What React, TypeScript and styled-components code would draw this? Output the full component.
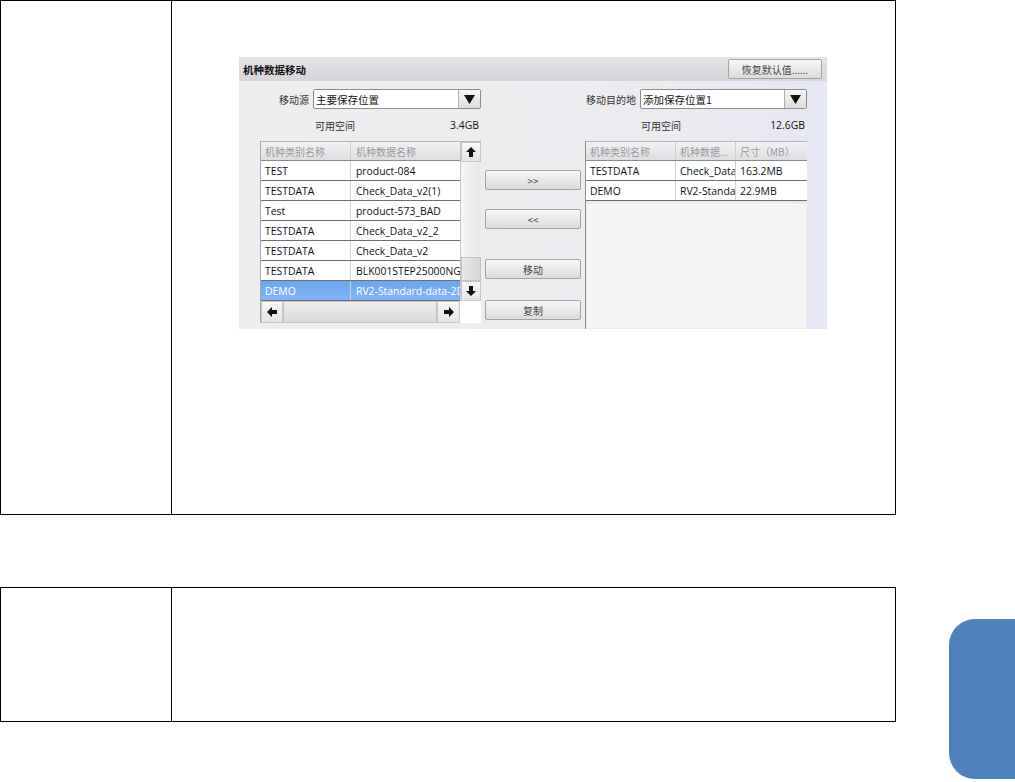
import styled, { createGlobalStyle } from 'styled-components';

const GlobalStyle = createGlobalStyle`
    html, body {
        margin: 0;
        padding: 0;
        background: #ffffff;
    }
    body {
        font-family: "Open Sans", "Noto Sans CJK SC", sans-serif;
    }
`;

const Page = styled.div`
    width: 1015px;
    height: 782px;
    display: flex;
    overflow: hidden;
`;

const MainCol = styled.div`
    width: 896px;
    display: flex;
    flex-direction: column;
`;

const SideCol = styled.div`
    flex: 1;
    display: flex;
    justify-content: flex-end;
    align-items: flex-start;
`;

const ThumbTab = styled.div`
    margin-top: 619px;
    width: 66px;
    height: 160px;
    background: #4f81bd;
    border-radius: 26px 0 0 26px;
`;

const Table = styled.div<{ $height: number; $top?: number }>`
    display: grid;
    grid-template-columns: 171px 1fr;
    height: ${p => p.$height}px;
    margin-top: ${p => p.$top || 0}px;
    border: 1px solid #000;
    box-sizing: border-box;
`;

const LeftCell = styled.div`
    border-right: 1px solid #000;
`;

const RightCell = styled.div`
    padding: 56px 0 0 67px;
`;

/* ---------- the captured dialog ---------- */

const Shot = styled.div`
    width: 588px;
    height: 272px;
    background: linear-gradient(to right, #eeeef0 0%, #ececf0 70%, #e5e7f3 100%);
    display: flex;
    flex-direction: column;
    font-size: 10.4px;
    color: #111;
    overflow: hidden;
`;

const TitleBar = styled.div`
    height: 25px;
    display: flex;
    align-items: center;
    justify-content: space-between;
    padding: 0 5px 0 4px;
    background: linear-gradient(#e4e4e8, #d6d6da);
`;

const Title = styled.span`
    font-family: "Noto Sans CJK SC", sans-serif;
    font-weight: 700;
    font-size: 10.5px;
    color: #111;
`;

const Button = styled.div<{ $width?: number; $top?: number }>`
    width: ${p => p.$width || 96}px;
    height: 20px;
    margin-top: ${p => p.$top || 0}px;
    box-sizing: border-box;
    border: 1px solid #a3a3a3;
    border-radius: 2px;
    background: linear-gradient(#f7f7f7, #dcdcdc);
    display: flex;
    align-items: center;
    justify-content: center;
    font-family: "Noto Sans CJK SC", sans-serif;
    font-size: 10px;
    color: #444;
`;

const Body = styled.div`
    display: grid;
    grid-template-columns: 221px 97px 221px;
    grid-template-rows: 20px 32px 1fr;
    column-gap: 4px;
    padding: 8px 0 0 21px;
    flex: 1;
`;

const ComboRow = styled.div`
    display: flex;
    justify-content: flex-end;
    align-items: center;
    gap: 4px;
    white-space: nowrap;
`;

const Label = styled.span`
    font-family: "Noto Sans CJK SC", sans-serif;
    font-size: 10px;
    color: #333;
`;

const Combo = styled.div`
    width: 168px;
    height: 20px;
    box-sizing: border-box;
    border: 1px solid #8c8c8c;
    border-radius: 2px;
    background: #fff;
    display: flex;
    align-items: center;
    font-family: "Noto Sans CJK SC", sans-serif;
    font-size: 10.5px;
    padding-left: 2px;
`;

const ComboText = styled.span`
    flex: 1;
`;

const ComboArrow = styled.div`
    width: 21px;
    height: 18px;
    border-left: 1px solid #b0b0b0;
    background: linear-gradient(#f6f6f6, #dedede);
    display: flex;
    align-items: center;
    justify-content: center;
`;

const SpaceRow = styled.div`
    display: flex;
    align-items: center;
    justify-content: space-between;
    padding: 0 2px 0 55px;
`;

const MiddleCol = styled.div`
    grid-column: 2;
    grid-row: 3;
    display: flex;
    flex-direction: column;
    padding-top: 29px;
`;

/* ---------- list tables ---------- */

const ListFrame = styled.div`
    grid-row: 3;
    display: grid;
    grid-template-columns: 200px 21px;
    grid-template-rows: 160px 22px;
    align-content: start;
`;

const ListView = styled.div`
    overflow: hidden;
    border-left: 1px solid #a8a8a8;
    box-sizing: border-box;
`;

const Row = styled.div<{ $cols: string; $selected?: boolean }>`
    display: grid;
    grid-template-columns: ${p => p.$cols};
    height: 20px;
    box-sizing: border-box;
    border-bottom: 1px solid #6e6e6e;
    background: ${p => (p.$selected ? 'linear-gradient(#6aa6f2, #82b6f6)' : '#ffffff')};
    color: ${p => (p.$selected ? '#ffffff' : '#111')};
    white-space: nowrap;
`;

const HeadRow = styled(Row)`
    background: linear-gradient(#f2f2f4, #dedee2);
    border-top: 1px solid #b4b4b4;
    border-bottom: 1px solid #8a8a8a;
    color: #9a9a9a;
    font-family: "Noto Sans CJK SC", sans-serif;
    font-size: 10px;
`;

const Cell = styled.div<{ $pad?: number; $last?: boolean }>`
    display: flex;
    align-items: center;
    padding-left: ${p => p.$pad ?? 4}px;
    overflow: hidden;
    border-right: ${p => (p.$last ? 'none' : '1px solid #d0d0d0')};
`;

const VScroll = styled.div`
    display: flex;
    flex-direction: column;
    border-left: 1px solid #c4c4c4;
    border-top: 1px solid #b4b4b4;
    box-sizing: border-box;
    background: #f3f3f3;
`;

const ScrollBtn = styled.div<{ $w?: number; $h?: number }>`
    width: ${p => (p.$w ? `${p.$w}px` : 'auto')};
    height: ${p => (p.$h ? `${p.$h}px` : 'auto')};
    flex-shrink: 0;
    display: flex;
    align-items: center;
    justify-content: center;
    background: linear-gradient(#f8f8f8, #e4e4e4);
    border: 1px solid #c8c8c8;
    box-sizing: border-box;
`;

const Track = styled.div`
    flex: 1;
    background: linear-gradient(to right, #f4f4f4, #e9e9e9);
`;

const Thumb = styled.div<{ $vertical?: boolean }>`
    flex: ${p => (p.$vertical ? '0 0 24px' : '1')};
    display: flex;
    align-items: center;
    justify-content: center;
    background: ${p =>
        p.$vertical ? 'linear-gradient(to right, #e8e8e8, #d6d6d6)' : 'linear-gradient(#eeeeee, #d8d8d8)'};
    border: 1px solid #c4c4c4;
    box-sizing: border-box;
`;

const Grip = styled.div<{ $vertical?: boolean }>`
    width: ${p => (p.$vertical ? 12 : 4)}px;
    height: ${p => (p.$vertical ? 4 : 12)}px;
    background-image: radial-gradient(circle, #a0a0a0 45%, transparent 50%);
    background-size: 2px 2px;
`;

const HScroll = styled.div`
    display: flex;
    background: #e8e8e8;
    border-left: 1px solid #a8a8a8;
    box-sizing: border-box;
`;

const Corner = styled.div`
    background: #ffffff;
`;

const RightFrame = styled.div`
    grid-row: 3;
    display: flex;
    flex-direction: column;
    border-left: 1px solid #8e8e8e;
    margin-left: -1px;
    width: 221px;
    height: 188px;
`;

const EmptyArea = styled.div`
    flex: 1;
    margin: 2px 0 0;
    background: #f5f5f6;
    border: 1px solid #ececee;
`;

const Arrow = ({ dir }: { dir: 'up' | 'down' | 'left' | 'right' }) => {
    const rot = { up: 0, right: 90, down: 180, left: 270 }[dir];
    return (
        <svg width="10" height="10" viewBox="0 0 10 10" style={{ transform: `rotate(${rot}deg)` }}>
            <path d="M5 0 L10 5 H7 V10 H3 V5 H0 Z" fill="#111" />
        </svg>
    );
};

const DropTriangle = () => (
    <svg width="11" height="9" viewBox="0 0 11 9">
        <path d="M0 0 H11 L5.5 9 Z" fill="#111" />
    </svg>
);

const leftRows = [
    ['TEST', 'product-084'],
    ['TESTDATA', 'Check_Data_v2(1)'],
    ['Test', 'product-573_BAD'],
    ['TESTDATA', 'Check_Data_v2_2'],
    ['TESTDATA', 'Check_Data_v2'],
    ['TESTDATA', 'BLK001STEP25000NG'],
    ['DEMO', 'RV2-Standard-data-2D'],
];

const rightRows = [
    ['TESTDATA', 'Check_Data', '163.2MB'],
    ['DEMO', 'RV2-Standa', '22.9MB'],
];

const LEFT_COLS = '90px 110px';
const RIGHT_COLS = '90px 60px 71px';

const MoveDialog = () => (
    <Shot>
        <TitleBar>
            <Title>机种数据移动</Title>
            <Button $width={94}>恢复默认值......</Button>
        </TitleBar>
        <Body>
            <ComboRow>
                <Label>移动源</Label>
                <Combo>
                    <ComboText>主要保存位置</ComboText>
                    <ComboArrow><DropTriangle /></ComboArrow>
                </Combo>
            </ComboRow>
            <div />
            <ComboRow>
                <Label>移动目的地</Label>
                <Combo>
                    <ComboText>添加保存位置1</ComboText>
                    <ComboArrow><DropTriangle /></ComboArrow>
                </Combo>
            </ComboRow>

            <SpaceRow>
                <Label>可用空间</Label>
                <span>3.4GB</span>
            </SpaceRow>
            <div />
            <SpaceRow>
                <Label>可用空间</Label>
                <span>12.6GB</span>
            </SpaceRow>

            <ListFrame>
                <ListView>
                    <HeadRow $cols={LEFT_COLS}>
                        <Cell>机种类别名称</Cell>
                        <Cell $pad={5} $last>机种数据名称</Cell>
                    </HeadRow>
                    {leftRows.map(([a, b], i) => (
                        <Row key={i} $cols={LEFT_COLS} $selected={i === leftRows.length - 1}>
                            <Cell>{a}</Cell>
                            <Cell $pad={5} $last>{b}</Cell>
                        </Row>
                    ))}
                </ListView>
                <VScroll>
                    <ScrollBtn $h={20}><Arrow dir="up" /></ScrollBtn>
                    <Track />
                    <Thumb $vertical><Grip $vertical /></Thumb>
                    <ScrollBtn $h={20}><Arrow dir="down" /></ScrollBtn>
                </VScroll>
                <HScroll>
                    <ScrollBtn $w={22}><Arrow dir="left" /></ScrollBtn>
                    <Thumb><Grip /></Thumb>
                    <ScrollBtn $w={23}><Arrow dir="right" /></ScrollBtn>
                </HScroll>
                <Corner />
            </ListFrame>

            <MiddleCol>
                <Button>&gt;&gt;</Button>
                <Button $top={19}>&lt;&lt;</Button>
                <Button $top={30}>移动</Button>
                <Button $top={21}>复制</Button>
            </MiddleCol>

            <RightFrame>
                <HeadRow $cols={RIGHT_COLS}>
                    <Cell>机种类别名称</Cell>
                    <Cell>机种数据...</Cell>
                    <Cell $last>尺寸（MB）</Cell>
                </HeadRow>
                {rightRows.map(([a, b, c], i) => (
                    <Row key={i} $cols={RIGHT_COLS}>
                        <Cell>{a}</Cell>
                        <Cell>{b}</Cell>
                        <Cell $last>{c}</Cell>
                    </Row>
                ))}
                <EmptyArea />
            </RightFrame>
        </Body>
    </Shot>
);

const App = () => (
    <>
        <GlobalStyle />
        <Page>
            <MainCol>
                <Table $height={515}>
                    <LeftCell />
                    <RightCell>
                        <MoveDialog />
                    </RightCell>
                </Table>
                <Table $height={135} $top={72}>
                    <LeftCell />
                    <RightCell />
                </Table>
            </MainCol>
            <SideCol>
                <ThumbTab />
            </SideCol>
        </Page>
    </>
);

export default App;
